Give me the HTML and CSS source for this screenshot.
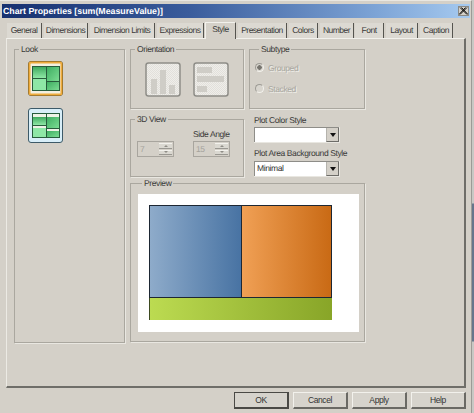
FILE: index.html
```html
<!DOCTYPE html>
<html lang="en">
<head>
<meta charset="utf-8">
<title>Chart Properties</title>
<link rel="stylesheet" href="styles.css">
</head>
<body>
<div class="dialog">
  <div class="titlebar">
    <span class="title">Chart Properties [sum(MeasureValue)]</span>
    <button class="close" aria-label="Close"><svg width="9" height="8" viewBox="0 0 9 8"><path d="M1 0.5L8 7.5M2.5 0.5L9 7.5M8 0.5L1 7.5M6.5 0.5L0 7.5" stroke="#111" stroke-width="1" fill="none"/></svg></button>
  </div>
  <div class="tabs">
    <span class="tab w-general">General</span>
    <span class="tab w-dims">Dimensions</span>
    <span class="tab w-limits">Dimension Limits</span>
    <span class="tab w-expr">Expressions</span>
    <span class="tab active w-style">Style</span>
    <span class="tab w-pres">Presentation</span>
    <span class="tab w-colors">Colors</span>
    <span class="tab w-number">Number</span>
    <span class="tab w-font">Font</span>
    <span class="tab w-layout">Layout</span>
    <span class="tab w-caption">Caption</span>
  </div>
  <div class="panel">
    <fieldset class="group look">
      <legend>Look</legend>
      <div class="look-list">
        <svg class="icon" width="35" height="35" viewBox="0 0 35 35">
          <defs>
            <linearGradient id="g1" x1="0" y1="0" x2="0" y2="1"><stop offset="0" stop-color="#3fa95f"/><stop offset="1" stop-color="#8fe8a6"/></linearGradient>
            <linearGradient id="g2" x1="0" y1="0" x2="1" y2="1"><stop offset="0" stop-color="#3fae62"/><stop offset="1" stop-color="#7bdc93"/></linearGradient>
          </defs>
          <rect x="0.5" y="0.5" width="34" height="34" rx="2.5" fill="#e6e0c8" stroke="#5c4a20"/>
          <rect x="1.5" y="1.5" width="32" height="32" rx="1.5" fill="#f3efdf" stroke="#eeab3c" stroke-width="2"/>
          <rect x="4" y="5" width="28" height="25" fill="#275c3c"/>
          <rect x="5" y="6" width="13" height="11" fill="url(#g1)"/>
          <rect x="5" y="18" width="13" height="11" fill="#8ee7a6"/>
          <rect x="19" y="6" width="12" height="14" fill="url(#g2)"/>
          <rect x="19" y="21" width="12" height="8" fill="url(#g2)"/>
        </svg>
        <svg class="icon" width="35" height="35" viewBox="0 0 35 35">
          <rect x="0.5" y="0.5" width="34" height="34" rx="2.5" fill="#d8eef8" stroke="#3d5a68"/>
          <rect x="4" y="5" width="28" height="25" fill="#275c3c"/>
          <rect x="5" y="6" width="13" height="3" fill="#eef2e6"/>
          <rect x="5" y="9" width="13" height="8" fill="url(#g1)"/>
          <rect x="5" y="18" width="13" height="2" fill="#eef2e6"/>
          <rect x="5" y="20" width="13" height="9" fill="#8ee7a6"/>
          <rect x="19" y="6" width="12" height="3" fill="#eef2e6"/>
          <rect x="19" y="9" width="12" height="11" fill="url(#g2)"/>
          <rect x="19" y="21" width="12" height="2" fill="#eef2e6"/>
          <rect x="19" y="23" width="12" height="6" fill="url(#g2)"/>
        </svg>
      </div>
    </fieldset>
    <div class="main">
      <div class="upper">
        <div class="col-left">
          <fieldset class="group orientation">
            <legend>Orientation</legend>
            <div class="orient-list">
              <svg class="icon" width="36" height="35" viewBox="0 0 36 35">
                <defs>
                  <pattern id="dither" width="2" height="2" patternUnits="userSpaceOnUse"><rect width="2" height="2" fill="#e2e0db"/><rect width="1" height="1" fill="#efeeea"/><rect x="1" y="1" width="1" height="1" fill="#efeeea"/></pattern>
                </defs>
                <rect x="1" y="1" width="34" height="33" rx="2.5" fill="url(#dither)" stroke="#8e8d88" stroke-width="1.5"/>
                <rect x="6" y="17" width="6" height="15" fill="#cfcdc7"/>
                <rect x="15" y="8" width="6" height="24" fill="#cfcdc7"/>
                <rect x="24" y="23" width="6" height="9" fill="#cfcdc7"/>
              </svg>
              <svg class="icon" width="36" height="35" viewBox="0 0 36 35">
                <rect x="1" y="1" width="34" height="33" rx="2.5" fill="url(#dither)" stroke="#8e8d88" stroke-width="1.5"/>
                <rect x="4" y="5" width="15" height="6" fill="#cfcdc7"/>
                <rect x="4" y="14" width="27" height="6" fill="#cfcdc7"/>
                <rect x="4" y="24" width="10" height="6" fill="#cfcdc7"/>
              </svg>
            </div>
          </fieldset>
          <fieldset class="group view3d">
            <legend>3D View</legend>
            <div class="spin-row">
              <div class="spin-col">
                <span class="spin-label"></span>
                <div class="spin"><span class="spin-val">7</span><span class="spin-btns"><i class="up"></i><i class="down"></i></span></div>
              </div>
              <div class="spin-col">
                <span class="spin-label">Side Angle</span>
                <div class="spin"><span class="spin-val">15</span><span class="spin-btns"><i class="up"></i><i class="down"></i></span></div>
              </div>
            </div>
          </fieldset>
        </div>
        <div class="col-right">
          <fieldset class="group subtype">
            <legend>Subtype</legend>
            <label class="radio"><span class="dot on"></span>Grouped</label>
            <label class="radio"><span class="dot"></span>Stacked</label>
          </fieldset>
          <div class="field first">
            <div class="field-label">Plot Color Style</div>
            <div class="combo"><span class="combo-val"></span><span class="combo-btn"></span></div>
          </div>
          <div class="field">
            <div class="field-label">Plot Area Background Style</div>
            <div class="combo"><span class="combo-val">Minimal</span><span class="combo-btn"></span></div>
          </div>
        </div>
      </div>
      <fieldset class="group preview">
        <legend>Preview</legend>
        <div class="canvas">
          <div class="chart">
            <div class="chart-top">
              <div class="blue"></div>
              <div class="orange"></div>
            </div>
            <div class="green"></div>
          </div>
        </div>
      </fieldset>
    </div>
  </div>
  <div class="buttons">
    <button class="btn default">OK</button>
    <button class="btn">Cancel</button>
    <button class="btn">Apply</button>
    <button class="btn">Help</button>
  </div>
</div>
<div class="edge"></div>
</body>
</html>
```
FILE: styles.css
```css
* { box-sizing: border-box; }
html, body { margin: 0; padding: 0; }
body {
  width: 474px;
  height: 413px;
  overflow: hidden;
  display: flex;
  background: #d4d0c8;
  font-family: "Liberation Sans", Arial, sans-serif;
  font-size: 8.5px;
  letter-spacing: -0.4px;
  color: #3a3a38;
  text-rendering: geometricPrecision;
}
.dialog { width: 472px; height: 413px; flex: none; padding-top: 3px; border-top: 1px solid #e9e7e1; border-right: 1px solid #9c9b96; }
.edge { width: 2px; height: 413px; flex: none; background: linear-gradient(180deg, #c8c8c4 0 203px, #66768c 204px 341px, #c8c8c4 342px); }
.titlebar {
  height: 14px;
  margin: 0 1px 0 2px;
  padding: 0 1px;
  display: flex;
  align-items: center;
  justify-content: space-between;
  background: linear-gradient(90deg, #16306f 0%, #3a5c9c 40%, #7da4d6 80%, #a6caf0 100%);
}
.title { color: #fff; font-weight: bold; font-size: 8.8px; letter-spacing: 0; white-space: nowrap; }
.close {
  width: 11px; height: 10px; padding: 0; border: 1px solid #8b8a85;
  background: #d4d0c8; display: flex; align-items: center; justify-content: center;
}
.tabs { display: flex; align-items: flex-end; height: 20px; padding-left: 7px; }
.tab {
  height: 15px;
  line-height: 15px;
  letter-spacing: -0.5px;
  text-align: center;
  background: #dcd9d2;
  border-right: 1px solid #55544f;
  white-space: nowrap;
  flex: none;
  margin-right: 2px;
}
.tab.active { height: 17px; line-height: 13px; background: #d4d0c8; border-top: 1px solid #f2f1ec; border-left: 1px solid #f2f1ec; border-right: 1px solid #55544f; position: relative; top: 1px; }
.w-general { width: 35px; }
.w-dims { width: 44px; }
.w-limits { width: 65px; }
.w-expr { width: 47px; margin-right: 1px; }
.w-style { width: 31px; }
.w-pres { width: 49px; }
.w-colors { width: 29px; }
.w-number { width: 34px; margin-right: 1px; }
.w-font { width: 29px; }
.w-layout { width: 32px; }
.w-caption { width: 33px; }
.panel {
  width: 460px;
  height: 350px;
  margin-left: 6px;
  padding: 4px 0 0 7px;
  display: flex;
  gap: 5px;
  border-top: 1px solid #f2f1ec;
  border-left: 1px solid #eceae4;
  border-right: 2px solid #6f6e69;
  border-bottom: 2px solid #6f6e69;
}
.group {
  margin: 0;
  padding: 0;
  min-width: 0;
  border: 1px solid #aaa79f;
  box-shadow: 1px 1px 0 #e9e7e1;
}
.group legend { padding: 0 2px; margin-left: 4px; line-height: 12px; height: 12px; }
.look { width: 111px; height: 300px; flex: none; }
.look-list { display: flex; flex-direction: column; gap: 12px; padding: 6px 0 0 13px; }
.icon { display: block; flex: none; }
.main { width: 236px; flex: none; display: flex; flex-direction: column; }
.upper { display: flex; gap: 5px; height: 141px; }
.col-left { width: 114px; flex: none; display: flex; flex-direction: column; gap: 4px; }
.orientation { height: 66px; }
.orient-list { display: flex; gap: 12px; padding: 7px 0 0 14px; }
.view3d { height: 64px; }
.spin-row { display: flex; gap: 19px; padding: 3px 0 0 6px; }
.spin-col { display: flex; flex-direction: column; width: 37px; }
.spin-label { height: 13px; line-height: 12px; white-space: nowrap; }
.spin { height: 16px; border: 1px solid #a8a59e; display: flex; justify-content: space-between; padding: 1px; background: #d4d0c8; }
.spin-val { color: #a5a39c; line-height: 12px; padding-left: 1px; }
.spin-btns { width: 13px; display: flex; flex-direction: column; gap: 1px; }
.spin-btns i { flex: 1; display: flex; align-items: center; justify-content: center; background: #dad8d1; border-top: 1px solid #f2f1ec; border-bottom: 1px solid #9a9892; }
.spin-btns i::after { content: ""; width: 0; height: 0; border-left: 2px solid transparent; border-right: 2px solid transparent; }
.spin-btns .up::after { border-bottom: 2px solid #8f8d87; }
.spin-btns .down::after { border-top: 2px solid #8f8d87; }
.col-right { width: 116px; flex: none; display: flex; flex-direction: column; }
.subtype { width: 116px; height: 66px; padding: 2px 0 0 5px; }
.radio { display: flex; align-items: center; height: 21px; gap: 4px; color: #a9a7a0; text-shadow: 1px 1px 0 #efeee9; }
.dot { width: 9px; height: 9px; border-radius: 50%; border: 1px solid #9d9b95; border-right-color: #f2f1ec; border-bottom-color: #f2f1ec; background: #d8d5ce; }
.dot.on { background: radial-gradient(circle, #77756f 0 2px, #d8d5ce 2.5px); }
.field { padding-left: 5px; }
.field.first { padding-top: 4px; }
.field-label { height: 15px; line-height: 15px; white-space: nowrap; margin-top: 3px; }
.field.first .field-label { margin-top: 0; height: 14px; }
.combo { width: 86px; height: 16px; display: flex; background: #fff; border-right: 1px solid #e9e7e1; border-bottom: 1px solid #e9e7e1; box-shadow: inset 1px 1px 0 #8e8d88; }
.combo-val { flex: 1; line-height: 15px; padding-left: 3px; color: #2e2e2c; }
.combo-btn { width: 13px; margin: 1px 0 0; background: #d4d0c8; border-left: 1px solid #b5b3ad; border-right: 1px solid #6d6c68; border-bottom: 1px solid #6d6c68; display: flex; align-items: center; justify-content: center; }
.combo-btn::after { content: ""; width: 0; height: 0; border-left: 3.5px solid transparent; border-right: 3.5px solid transparent; border-top: 4px solid #111; }
.preview { width: 235px; height: 165px; margin-top: -7px; padding: 5px 0 0 7px; }
.canvas { width: 221px; height: 138px; background: #fff; padding: 11px 0 0 11px; }
.chart { width: 183px; height: 115px; display: flex; flex-direction: column; }
.chart-top { height: 93px; display: flex; border: 1px solid #1d2733; border-bottom: 1.5px solid #1d2733; }
.blue { width: 92px; background: linear-gradient(90deg, #8eabca, #4873a3); border-right: 1px solid #1d2733; }
.orange { flex: 1; background: linear-gradient(90deg, #f0a055, #c96a15); }
.green { flex: 1; background: linear-gradient(90deg, #bcdb51, #88a528); border-left: 1px solid #3d4a20; }
.buttons { display: flex; justify-content: flex-end; gap: 4px; padding: 4px 5px 0 0; }
.btn {
  width: 55px; height: 17px; padding: 0; font: inherit; letter-spacing: inherit; color: #333; background: #d6d3cc;
  border: 1px solid; border-color: #f2f1ec #6a6964 #6a6964 #f2f1ec;
  border-right-width: 2px; border-bottom-width: 2px;
}
.btn.default { border: 2px solid #4a4945; border-top-width: 1px; border-left-width: 1px; }
```
